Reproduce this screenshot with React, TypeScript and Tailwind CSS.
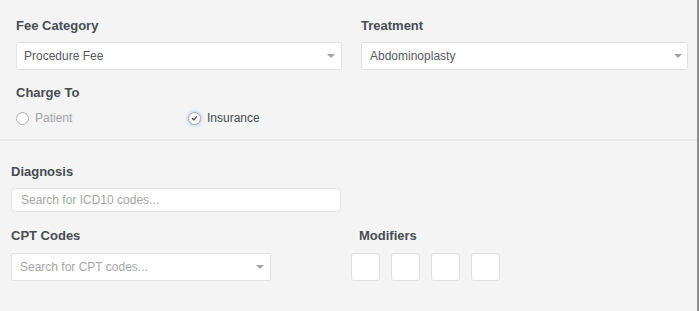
import { FC } from "react";

const Caret: FC = () => (
  <span className="block h-0 w-0 border-x-[4px] border-t-[4px] border-x-transparent border-t-[#a3a3a3]" />
);

interface SelectBoxPropsType {
  value: string;
  placeholder?: boolean;
  className?: string;
  padLeft?: string;
  padRight?: string;
}

const SelectBox: FC<SelectBoxPropsType> = ({ value, placeholder, className, padLeft, padRight }) => (
  <div
    className={`flex items-center justify-between bg-white border border-[#e3e3e3] rounded-[2px] ${className} ${padLeft} ${padRight}`}
  >
    <span className={`text-[12px] ${placeholder ? "text-[#a6a6a6]" : "text-[#555a5f]"}`}>{value}</span>
    <Caret />
  </div>
);

const Label: FC<{ text: string; className?: string }> = ({ text, className }) => (
  <h3 className={`text-[13px] leading-[16px] font-bold text-[#474c52] ${className ?? ""}`}>{text}</h3>
);

export default function App() {
  return (
    <div
      className="w-[699px] h-[311px] bg-[#f4f4f4] border-r-2 border-[#8d8d8d] overflow-hidden"
      style={{ fontFamily: '"Liberation Sans", Arial, sans-serif' }}
    >
      {/* charge section */}
      <section className="h-[141px] border-b-2 border-[#e8e8e8] pt-[18px] pl-[16px] pr-[9px]">
        <div className="flex gap-[19px]">
          <div className="w-[326px]">
            <Label text="Fee Category" />
            <SelectBox value="Procedure Fee" className="mt-2 h-[28px]" padLeft="pl-[7px]" padRight="pr-[6px]" />
          </div>
          <div className="w-[327px]">
            <Label text="Treatment" />
            <SelectBox value="Abdominoplasty" className="mt-2 h-[28px]" padLeft="pl-[8px]" padRight="pr-[5px]" />
          </div>
        </div>

        <Label text="Charge To" className="mt-[15px]" />
        <div className="mt-[10px] flex items-center h-[14px]">
          <label className="w-[172px] flex items-center gap-[6px]">
            <span className="w-[13px] h-[13px] rounded-full border border-[#b0b0b0] bg-white" />
            <span className="text-[12px] text-[#a3a3a3]">Patient</span>
          </label>
          <label className="flex items-center gap-[6px]">
            <span className="w-[13px] h-[13px] rounded-full border border-[#aaaaaa] bg-white flex items-center justify-center shadow-[0_0_3px_1px_rgba(120,170,230,0.45)]">
              <svg width="7" height="6" viewBox="0 0 7 6">
                <path d="M1 3.2 L2.8 4.8 L6 1.3" fill="none" stroke="#444" strokeWidth="1.2" />
              </svg>
            </span>
            <span className="text-[12px] text-[#474c51]">Insurance</span>
          </label>
        </div>
      </section>

      {/* coding section */}
      <section className="pt-[23px] pl-[11px]">
        <Label text="Diagnosis" />
        <div className="mt-2 w-[330px] h-[24px] bg-white border border-[#e3e3e3] rounded-[2px] pl-[9px] flex items-center">
          <span className="text-[12px] text-[#a6a6a6]">Search for ICD10 codes...</span>
        </div>

        <div className="mt-4 flex gap-[80px]">
          <div className="w-[260px]">
            <Label text="CPT Codes" />
            <SelectBox
              value="Search for CPT codes..."
              placeholder
              className="mt-[9px] h-[28px]"
              padLeft="pl-[8px]"
              padRight="pr-[6px]"
            />
          </div>
          <div>
            <Label text="Modifiers" className="ml-2" />
            <div className="mt-[9px] flex gap-[11px]">
              {[0, 1, 2, 3].map((i) => (
                <div key={i} className="w-[29px] h-[28px] bg-white border border-[#e0e0e0] rounded-[3px]" />
              ))}
            </div>
          </div>
        </div>
      </section>
    </div>
  );
}
